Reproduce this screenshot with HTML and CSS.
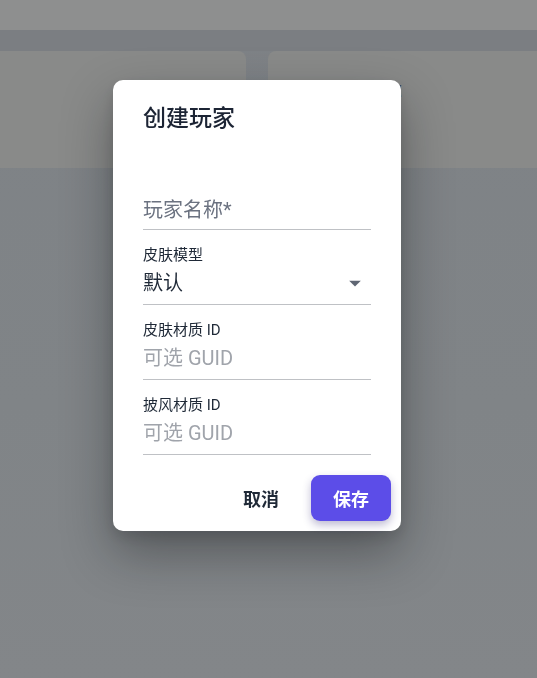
FILE: index.html
```html
<!DOCTYPE html>
<html lang="zh-CN">
<head>
<meta charset="utf-8">
<title>创建玩家</title>
<link rel="stylesheet" href="styles.css">
</head>
<body>
<div class="page">
  <header class="topbar"></header>
  <main class="content">
    <div class="cards">
      <section class="card card-left"></section>
      <section class="card card-right">
        <div class="card-title">玩家档案名称</div>
        <div class="card-sub">皮肤模型：默认经典。</div>
      </section>
    </div>
  </main>
</div>

<div class="scrim">
  <div class="dialog" role="dialog" aria-labelledby="dlg-title">
    <h2 class="dialog-title" id="dlg-title">创建玩家</h2>
    <form class="form">
      <div class="field field-first">
        <div class="input placeholder-strong">玩家名称*</div>
      </div>
      <div class="field">
        <div class="label">皮肤模型</div>
        <div class="input select">
          <span class="value">默认</span>
          <svg class="arrow" width="28" height="28" viewBox="0 0 24 24" aria-hidden="true"><path d="M7 10l5 5 5-5z" fill="#5f6673"/></svg>
        </div>
      </div>
      <div class="field">
        <div class="label">皮肤材质 ID</div>
        <div class="input placeholder">可选 GUID</div>
      </div>
      <div class="field">
        <div class="label">披风材质 ID</div>
        <div class="input placeholder">可选 GUID</div>
      </div>
      <div class="actions">
        <button type="button" class="btn btn-text">取消</button>
        <button type="button" class="btn btn-primary">保存</button>
      </div>
    </form>
  </div>
</div>
</body>
</html>
```

FILE: styles.css
```css
* { box-sizing: border-box; }

html, body {
  margin: 0;
  padding: 0;
  height: 100%;
}

body {
  font-family: Roboto, "Noto Sans CJK SC", sans-serif;
  background: linear-gradient(180deg, #7e8286 0%, #808487 60%, #838689 100%);
  overflow: hidden;
}

.page {
  min-height: 100%;
}

.topbar {
  height: 30px;
  background: #8e8f8f;
}

.content {
  padding-top: 21px;
  background: linear-gradient(180deg, #7b7e82 0px, #7b7e82 21px, transparent 21px);
}

.cards {
  display: grid;
  grid-template-columns: 246px 1fr;
  gap: 22px;
}

.card {
  height: 117px;
  background: #898a89;
  border-radius: 8px;
}

.card-left {
  border-radius: 0 8px 8px 0;
}

.card-right {
  border-radius: 8px 0 0 8px;
  padding: 31px 0 0 20px;
  color: #3b4252;
}

.card-title {
  font-size: 19px;
  line-height: 22px;
  white-space: nowrap;
}

.card-sub {
  margin-top: 7px;
  font-size: 12px;
  line-height: 18px;
  white-space: nowrap;
}

.scrim {
  position: fixed;
  inset: 0;
}

.dialog {
  position: absolute;
  left: 113px;
  top: 80px;
  width: 288px;
  background: #ffffff;
  border-radius: 10px;
  padding: 23px 10px 10px 30px;
  box-shadow: 0 22px 50px rgba(15, 18, 22, 0.38), 0 6px 14px rgba(15, 18, 22, 0.12);
}

.dialog-title {
  margin: 0;
  font-size: 23px;
  line-height: 32px;
  font-weight: 500;
  color: #1c2434;
}

.form {
  margin: 0;
  padding-top: 55px;
}

.field {
  width: 228px;
  margin-bottom: 15px;
}

.label {
  font-size: 15px;
  line-height: 20px;
  color: #1f2937;
}

.input {
  font-size: 20px;
  line-height: 24px;
  padding: 6px 0 9px;
  border-bottom: 1px solid #bfc1c5;
  color: #1f2937;
}

.field-first .input {
  padding: 8px 0 7px;
}

.placeholder-strong {
  color: #6b7280;
}

.placeholder {
  color: #a0a4ab;
}

.select {
  display: flex;
  align-items: center;
  justify-content: space-between;
  height: 40px;
}

.arrow {
  display: block;
  margin: -2px 2px -2px 0;
}

.value {
  display: block;
}

.actions {
  display: flex;
  justify-content: flex-end;
  gap: 10px;
  margin-top: 20px;
}

.btn {
  font-family: Roboto, "Noto Sans CJK SC", sans-serif;
  font-size: 18px;
  font-weight: 700;
  height: 46px;
  padding: 0 22px;
  border: none;
  border-radius: 9px;
  cursor: pointer;
}

.btn-text {
  background: transparent;
  color: #1f2937;
}

.btn-primary {
  width: 80px;
  padding: 0;
  background: #5c4de8;
  color: #ffffff;
  box-shadow: 0 4px 8px rgba(40, 30, 110, 0.3);
}
```
